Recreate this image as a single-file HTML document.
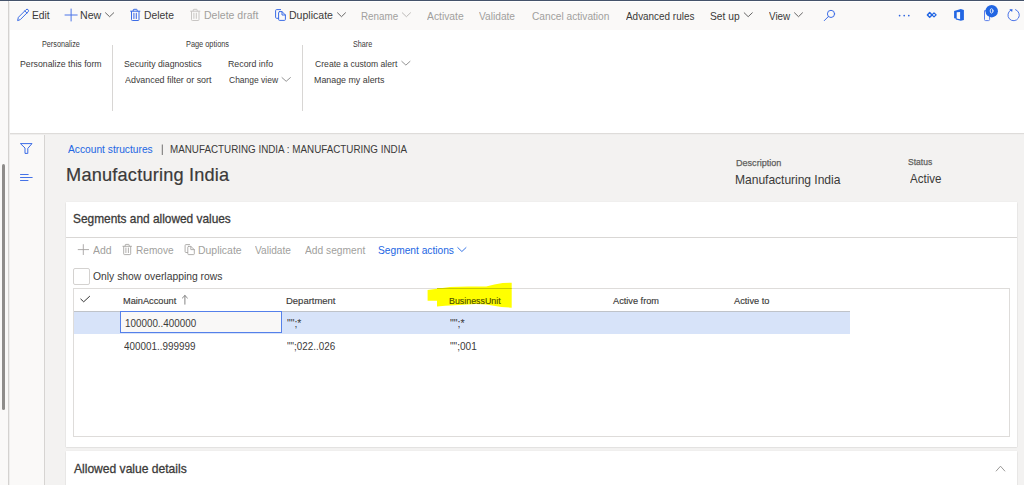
<!DOCTYPE html>
<html><head><meta charset="utf-8">
<style>
*{box-sizing:border-box;margin:0;padding:0}
html,body{width:1024px;height:485px;overflow:hidden;background:#faf9f8;font-family:"Liberation Sans",sans-serif;position:relative}
.a{position:absolute}
.t{position:absolute;white-space:pre;font-family:"Liberation Sans",sans-serif}
svg{position:absolute;overflow:visible}
</style></head><body>
<!-- top dark line -->
<div class="a" style="left:0;top:0;width:1024px;height:1px;background:#45536b"></div>
<div class="a" style="left:9px;top:1px;width:1015px;height:1px;background:#ffffff"></div>
<!-- toolbar -->
<div class="a" style="left:9px;top:2px;width:1015px;height:28px;background:#faf9f8"></div>
<!-- action pane -->
<div class="a" style="left:9px;top:30px;width:1015px;height:103px;background:#ffffff"></div>
<div class="a" style="left:112px;top:45px;width:1px;height:66px;background:#d8d6d4"></div>
<div class="a" style="left:302px;top:45px;width:1px;height:66px;background:#d8d6d4"></div>
<!-- separator -->
<div class="a" style="left:9px;top:133px;width:1015px;height:1px;background:#dedcda"></div>
<div class="a" style="left:9px;top:134px;width:1015px;height:1px;background:#efeeed"></div>
<!-- left border -->
<div class="a" style="left:8px;top:1px;width:1px;height:484px;background:#d4d2d0"></div>
<div class="a" style="left:9px;top:2px;width:1px;height:483px;background:#eeedec"></div>
<!-- scrollbar -->
<div class="a" style="left:2px;top:164px;width:3px;height:246px;background:#8f8d8b;border-radius:1.5px"></div>
<!-- nav pane -->
<div class="a" style="left:10px;top:135px;width:34px;height:350px;background:#faf9f8"></div>
<div class="a" style="left:44px;top:135px;width:1px;height:350px;background:#d6d4d2"></div>
<!-- content bg -->
<div class="a" style="left:45px;top:135px;width:979px;height:350px;background:#f3f2f1"></div>
<!-- panel 1 -->
<div class="a" style="left:66px;top:202px;width:951px;height:245px;background:#fff;box-shadow:0 0.5px 1.5px rgba(0,0,0,0.14),0 0 1px rgba(0,0,0,0.08)"></div>
<div class="a" style="left:66px;top:237px;width:951px;height:1px;background:#d9d7d5"></div>
<!-- checkbox -->
<div class="a" style="left:73px;top:268px;width:17px;height:17px;border:1px solid #d4d2d0;border-radius:2px;background:#fff"></div>
<!-- grid -->
<div class="a" style="left:73px;top:288px;width:937px;height:149px;border:1px solid #dedcda;background:#fff"></div>
<div class="a" style="left:74px;top:311px;width:776px;height:23px;background:#d7e3f9"></div>
<div class="a" style="left:74px;top:311px;width:776px;height:1px;background:#bfc3c9"></div>
<div class="a" style="left:120px;top:311px;width:162px;height:22px;border:1px solid #5580ea;background:#f9f8f7"></div>
<!-- panel 2 -->
<div class="a" style="left:66px;top:451px;width:951px;height:40px;background:#fff;box-shadow:0 0.5px 1.5px rgba(0,0,0,0.14),0 0 1px rgba(0,0,0,0.08)"></div>
<!-- yellow highlight -->
<svg style="left:0;top:0" width="1024" height="485"><path d="M427.6,289.9 L437,288.75 L449.8,287 L468.6,286.4 L486.2,286.6 L494.4,284.6 L502.6,282.9 L511.7,282.7 L511.7,307.7 L501.4,306.9 L486.2,304.6 L475.6,304 L459.2,304.9 L445.2,305.7 L437,306.6 L437,300.7 L427.6,300.7 Z" fill="#ffff00"/>
<rect x="437" y="288" width="74.7" height="1" fill="#c9c900"/></svg>

<!-- ICONS -->
<svg style="left:0;top:0" width="1024" height="485" fill="none" stroke-linecap="round" stroke-linejoin="round">
 <!-- pencil -->
 <path d="M17.7,20.2 L18.4,17.3 L26,9.7 A1.45,1.45 0 0 1 28.1,11.8 L20.5,19.4 Z M24.8,10.9 L26.9,13" stroke="#3b6ce6" stroke-width="1"/>
 <!-- plus New -->
 <path d="M71.1,9 V21 M65,15 H77.2" stroke="#4b74e8" stroke-width="1"/>
 <path d="M105.5,12.8 L109.6,16.7 L113.7,12.8" stroke="#555" stroke-width="0.9"/>
 <!-- trash -->
 <path d="M130.6,11.2 H139.9 M133.2,11 V10 Q133.2,9.3 134,9.3 H136.4 Q137.2,9.3 137.2,10 V11 M131.5,11.5 V19.7 Q131.5,20.5 132.3,20.5 H138.2 Q139,20.5 139,19.7 V11.5" stroke="#3b6ce6" stroke-width="1"/>
 <path d="M133.9,13.2 V18.4 M136.3,13.2 V18.4" stroke="#4b74e8" stroke-width="1.1"/>
 <path d="M190.6,11.2 H199.9 M193.2,11 V10 Q193.2,9.3 194,9.3 H196.4 Q197.2,9.3 197.2,10 V11 M191.5,11.5 V19.7 Q191.5,20.5 192.3,20.5 H198.2 Q199,20.5 199,19.7 V11.5 M193.9,13.2 V18.4 M196.3,13.2 V18.4" stroke="#c8c6c4" stroke-width="1"/>
 <!-- duplicate -->
 <path d="M280.6,9.6 H276.6 Q275.6,9.6 275.6,10.6 V17.3 Q275.6,18.3 276.6,18.3 H278.4" stroke="#3b6ce6" stroke-width="1"/>
 <path d="M279.5,11.6 H282 L285.4,15 V19.4 Q285.4,20.4 284.4,20.4 H279.5 Q278.6,20.4 278.6,19.4 V12.6 Q278.6,11.6 279.5,11.6 Z M282,11.6 V15 H285.4" stroke="#3b6ce6" stroke-width="1"/>
 <path d="M337.5,12.8 L341.5,16.7 L345.5,12.8" stroke="#555" stroke-width="0.9"/>
 <path d="M402.3,12.8 L406.4,16.7 L410.5,12.8" stroke="#b5b3b1" stroke-width="0.9"/>
 <path d="M744.2,12.8 L748.2,16.7 L752.3,12.8" stroke="#555" stroke-width="0.9"/>
 <path d="M794.5,12.8 L798.5,16.7 L802.5,12.8" stroke="#555" stroke-width="0.9"/>
 <!-- search -->
 <circle cx="831" cy="13.9" r="3.6" stroke="#3b6ce6" stroke-width="1"/>
 <path d="M828.4,16.5 L824.3,20.6" stroke="#3b6ce6" stroke-width="1"/>
 <!-- dots -->
 <circle cx="899.6" cy="15.6" r="0.85" fill="#2b63e0"/>
 <circle cx="904.2" cy="15.6" r="0.85" fill="#2b63e0"/>
 <circle cx="908.8" cy="15.6" r="0.85" fill="#2b63e0"/>
 <!-- power icon -->
 <path d="M929.7,12.5 L932,14.9 L929.7,17.3 L927.4,14.9 Z" stroke="#2266e3" stroke-width="1.5"/>
 <path d="M934,12.9 L936.1,14.9 L934,16.9 L932,14.9 Z" stroke="#2266e3" stroke-width="1.3"/>
 <!-- office -->
 <path fill-rule="evenodd" d="M954.1,11 L960.8,9.1 L963.9,9.9 V20 L960.8,20.8 L955.8,19.5 V18.4 L954.1,18.3 Z M956.7,12.3 L960.1,11.9 V19.3 L956.7,18.6 Z" fill="#2266e3"/>
 <!-- notification -->
 <path d="M984.5,11 V19.5 Q984.5,20.6 985.6,20.6 H988.5 Q989.6,20.6 989.6,19.5 V11 Z" stroke="#5b7fea" stroke-width="1"/>
 <circle cx="991.7" cy="11.2" r="6.2" fill="#2266e3"/>
 <ellipse cx="991.6" cy="10.9" rx="1.4" ry="2.2" stroke="#fff" stroke-width="0.85"/>
 <!-- refresh -->
 <path d="M1010.75,10.06 A5.7,5.7 0 1 0 1015.55,9.64" stroke="#4b74e8" stroke-width="1"/>
 <path d="M1009.3,9.2 L1012.6,9.2 L1012.1,12.1 Z" fill="#2f66e4"/>
 <!-- action chevrons -->
 <path d="M282,77.6 L286.2,81.3 L290.4,77.6" stroke="#777" stroke-width="0.8"/>
 <path d="M401.8,61.4 L405.9,65.1 L410,61.4" stroke="#777" stroke-width="0.8"/>
 <!-- breadcrumb sep -->
 <path d="M162.3,144.9 V154.6" stroke="#6b6a69" stroke-width="0.95"/>
 <!-- funnel -->
 <path d="M20.8,143.6 H32 L27.8,148.4 V153.4 H25 V148.4 Z" stroke="#3b6ce6" stroke-width="1"/>
 <!-- lines -->
 <path d="M20.5,174.5 H28.2 M20.5,177.5 H32.2 M20.5,180.5 H28" stroke="#3b6ce6" stroke-width="0.95"/>
 <!-- panel plus -->
 <path d="M83.3,244.6 V254.6 M78.2,249.6 H88.6" stroke="#a5a3a1" stroke-width="0.9"/>
 <!-- panel trash -->
 <path d="M122.9,246.3 H131.5 M125.2,246 V245 Q125.2,244.4 125.9,244.4 H128.5 Q129.2,244.4 129.2,245 V246 M123.7,246.5 V253.8 Q123.7,254.6 124.5,254.6 H129.9 Q130.7,254.6 130.7,253.8 V246.5 M125.9,248 V252.6 M128.4,248 V252.6" stroke="#a8a6a4" stroke-width="0.9"/>
 <!-- panel dup -->
 <path d="M189.6,244.6 H186 Q185.1,244.6 185.1,245.5 V251.6 Q185.1,252.5 186,252.5 H187.6" stroke="#a8a6a4" stroke-width="0.9"/>
 <path d="M188.6,246.4 H190.8 L194.3,249.6 V253.8 Q194.3,254.6 193.5,254.6 H188.6 Q187.8,254.6 187.8,253.8 V247.2 Q187.8,246.4 188.6,246.4 Z M190.8,246.4 V249.6 H194.3" stroke="#a8a6a4" stroke-width="0.9"/>
 <path d="M457.8,247.6 L461.9,251.5 L466,247.6" stroke="#2266e3" stroke-width="0.9"/>
 <!-- grid check -->
 <path d="M80.8,299.1 L83.7,301.8 L89.6,296.3" stroke="#333" stroke-width="1"/>
 <!-- up arrow -->
 <path d="M184.9,295.6 V304.2 M182.4,298 L184.9,295.5 L187.4,298" stroke="#777" stroke-width="0.9"/>
 <!-- collapse chevron -->
 <path d="M996.2,471 L1000.5,466.2 L1004.8,471" stroke="#8f8d8b" stroke-width="0.9"/>
</svg>
<div class="t" style="left:31.88px;top:10.0px;font-size:11.17px;line-height:11.17px;letter-spacing:0.003px;color:#3b3a39;transform:scaleX(0.922);transform-origin:0 0">Edit</div>
<div class="t" style="left:80.05px;top:10.0px;font-size:11.17px;line-height:11.17px;letter-spacing:0.012px;color:#3b3a39;transform:scaleX(0.952);transform-origin:0 0">New</div>
<div class="t" style="left:144.07px;top:10.0px;font-size:11.17px;line-height:11.17px;letter-spacing:0.009px;color:#3b3a39;transform:scaleX(0.927);transform-origin:0 0">Delete</div>
<div class="t" style="left:204.06px;top:10.0px;font-size:11.17px;line-height:11.17px;letter-spacing:-0.0px;color:#a19f9d;transform:scaleX(0.943);transform-origin:0 0">Delete draft</div>
<div class="t" style="left:289.06px;top:10.0px;font-size:11.17px;line-height:11.17px;letter-spacing:0.009px;color:#3b3a39;transform:scaleX(0.944);transform-origin:0 0">Duplicate</div>
<div class="t" style="left:361.02px;top:11.0px;font-size:11.17px;line-height:11.17px;letter-spacing:0.015px;color:#a19f9d;transform:scaleX(0.88);transform-origin:0 0">Rename</div>
<div class="t" style="left:426.9px;top:11.0px;font-size:11.17px;line-height:11.17px;letter-spacing:-0.006px;color:#a19f9d;transform:scaleX(0.926);transform-origin:0 0">Activate</div>
<div class="t" style="left:479.4px;top:11.0px;font-size:11.17px;line-height:11.17px;letter-spacing:-0.003px;color:#a19f9d;transform:scaleX(0.913);transform-origin:0 0">Validate</div>
<div class="t" style="left:531.9px;top:11.0px;font-size:11.17px;line-height:11.17px;letter-spacing:-0.003px;color:#a19f9d;transform:scaleX(0.912);transform-origin:0 0">Cancel activation</div>
<div class="t" style="left:625.6px;top:11.0px;font-size:11.17px;line-height:11.17px;letter-spacing:0.006px;color:#3b3a39;transform:scaleX(0.888);transform-origin:0 0">Advanced rules</div>
<div class="t" style="left:709.98px;top:11.0px;font-size:11.17px;line-height:11.17px;letter-spacing:0.006px;color:#3b3a39;transform:scaleX(0.919);transform-origin:0 0">Set up</div>
<div class="t" style="left:768.75px;top:11.0px;font-size:11.17px;line-height:11.17px;letter-spacing:0.012px;color:#3b3a39;transform:scaleX(0.885);transform-origin:0 0">View</div>
<div class="t" style="left:42.04px;top:40.0px;font-size:8.38px;line-height:8.38px;letter-spacing:0.003px;color:#3b3a39;transform:scaleX(0.864);transform-origin:0 0">Personalize</div>
<div class="t" style="left:186.02px;top:40.0px;font-size:8.38px;line-height:8.38px;letter-spacing:0.003px;color:#3b3a39;transform:scaleX(0.879);transform-origin:0 0">Page options</div>
<div class="t" style="left:352.54px;top:40.0px;font-size:8.38px;line-height:8.38px;letter-spacing:0.022px;color:#3b3a39;transform:scaleX(0.86);transform-origin:0 0">Share</div>
<div class="t" style="left:19.91px;top:59.0px;font-size:9.78px;line-height:9.78px;letter-spacing:0.006px;color:#3b3a39;transform:scaleX(0.894);transform-origin:0 0">Personalize this form</div>
<div class="t" style="left:124.41px;top:59.0px;font-size:9.78px;line-height:9.78px;letter-spacing:0.003px;color:#3b3a39;transform:scaleX(0.894);transform-origin:0 0">Security diagnostics</div>
<div class="t" style="left:227.9px;top:59.0px;font-size:9.78px;line-height:9.78px;letter-spacing:0.0px;color:#3b3a39;transform:scaleX(0.902);transform-origin:0 0">Record info</div>
<div class="t" style="left:314.7px;top:59.0px;font-size:9.78px;line-height:9.78px;letter-spacing:-0.0px;color:#3b3a39;transform:scaleX(0.882);transform-origin:0 0">Create a custom alert</div>
<div class="t" style="left:125.3px;top:75.0px;font-size:9.78px;line-height:9.78px;letter-spacing:-0.006px;color:#3b3a39;transform:scaleX(0.912);transform-origin:0 0">Advanced filter or sort</div>
<div class="t" style="left:228.8px;top:75.0px;font-size:9.78px;line-height:9.78px;letter-spacing:0.009px;color:#3b3a39;transform:scaleX(0.868);transform-origin:0 0">Change view</div>
<div class="t" style="left:313.79px;top:75.0px;font-size:9.78px;line-height:9.78px;letter-spacing:-0.003px;color:#3b3a39;transform:scaleX(0.908);transform-origin:0 0">Manage my alerts</div>
<div class="t" style="left:67.9px;top:144.0px;font-size:11.17px;line-height:11.17px;letter-spacing:0.006px;color:#2266e3;transform:scaleX(0.916);transform-origin:0 0">Account structures</div>
<div class="t" style="left:169.72px;top:144.0px;font-size:11.17px;line-height:11.17px;letter-spacing:0.006px;color:#3b3a39;transform:scaleX(0.88);transform-origin:0 0">MANUFACTURING INDIA : MANUFACTURING INDIA</div>
<div class="t" style="left:66.1px;top:166.0px;font-size:18.16px;line-height:18.16px;letter-spacing:0.2px;color:#3b3a39;-webkit-text-stroke:0.2px #3b3a39">Manufacturing India</div>
<div class="t" style="left:735.75px;top:158.0px;font-size:9.78px;line-height:9.78px;letter-spacing:-0.006px;color:#605e5c;transform:scaleX(0.929);transform-origin:0 0;-webkit-text-stroke:0.25px #605e5c">Description</div>
<div class="t" style="left:735.29px;top:174.0px;font-size:12.57px;line-height:12.57px;letter-spacing:-0.05px;color:#3b3a39;transform:scaleX(0.963);transform-origin:0 0">Manufacturing India</div>
<div class="t" style="left:908.0px;top:157.0px;font-size:9.78px;line-height:9.78px;letter-spacing:0.0px;color:#605e5c;transform:scaleX(0.875);transform-origin:0 0;-webkit-text-stroke:0.25px #605e5c">Status</div>
<div class="t" style="left:909.5px;top:173.0px;font-size:12.57px;line-height:12.57px;letter-spacing:0.003px;color:#3b3a39;transform:scaleX(0.919);transform-origin:0 0">Active</div>
<div class="t" style="left:72.76px;top:213.0px;font-size:12.57px;line-height:12.57px;letter-spacing:0.003px;color:#3b3a39;transform:scaleX(0.945);transform-origin:0 0;-webkit-text-stroke:0.3px #3b3a39">Segments and allowed values</div>
<div class="t" style="left:92.5px;top:245.0px;font-size:11.17px;line-height:11.17px;letter-spacing:-0.006px;color:#a19f9d;transform:scaleX(0.937);transform-origin:0 0">Add</div>
<div class="t" style="left:135.69px;top:245.0px;font-size:11.17px;line-height:11.17px;letter-spacing:0.0px;color:#a19f9d;transform:scaleX(0.905);transform-origin:0 0">Remove</div>
<div class="t" style="left:198.46px;top:245.0px;font-size:11.17px;line-height:11.17px;letter-spacing:-0.003px;color:#a19f9d;transform:scaleX(0.938);transform-origin:0 0">Duplicate</div>
<div class="t" style="left:254.5px;top:245.0px;font-size:11.17px;line-height:11.17px;letter-spacing:0.006px;color:#a19f9d;transform:scaleX(0.91);transform-origin:0 0">Validate</div>
<div class="t" style="left:304.5px;top:245.0px;font-size:11.17px;line-height:11.17px;letter-spacing:-0.006px;color:#a19f9d;transform:scaleX(0.917);transform-origin:0 0">Add segment</div>
<div class="t" style="left:377.83px;top:245.0px;font-size:11.17px;line-height:11.17px;letter-spacing:-0.006px;color:#2266e3;transform:scaleX(0.915);transform-origin:0 0">Segment actions</div>
<div class="t" style="left:93.4px;top:271.0px;font-size:11.17px;line-height:11.17px;letter-spacing:0.006px;color:#3b3a39;transform:scaleX(0.927);transform-origin:0 0">Only show overlapping rows</div>
<div class="t" style="left:123.06px;top:296.0px;font-size:9.78px;line-height:9.78px;letter-spacing:-0.003px;color:#3b3a39;transform:scaleX(0.943);transform-origin:0 0;-webkit-text-stroke:0.15px #3b3a39">MainAccount</div>
<div class="t" style="left:285.93px;top:296.0px;font-size:9.78px;line-height:9.78px;letter-spacing:0.0px;color:#3b3a39;transform:scaleX(0.97);transform-origin:0 0;-webkit-text-stroke:0.15px #3b3a39">Department</div>
<div class="t" style="left:449.29px;top:296.0px;font-size:9.78px;line-height:9.78px;letter-spacing:0.003px;color:#4d4d00;transform:scaleX(0.907);transform-origin:0 0;-webkit-text-stroke:0.15px #4d4d00">BusinessUnit</div>
<div class="t" style="left:613.25px;top:296.0px;font-size:9.78px;line-height:9.78px;letter-spacing:-0.003px;color:#3b3a39;transform:scaleX(0.942);transform-origin:0 0;-webkit-text-stroke:0.15px #3b3a39">Active from</div>
<div class="t" style="left:734.4px;top:296.0px;font-size:9.78px;line-height:9.78px;letter-spacing:-0.0px;color:#3b3a39;transform:scaleX(0.946);transform-origin:0 0;-webkit-text-stroke:0.15px #3b3a39">Active to</div>
<div class="t" style="left:124.52px;top:318.0px;font-size:11.17px;line-height:11.17px;letter-spacing:0.006px;color:#3b3a39;transform:scaleX(0.882);transform-origin:0 0">100000..400000</div>
<div class="t" style="left:123.7px;top:341.0px;font-size:11.17px;line-height:11.17px;letter-spacing:0.006px;color:#3b3a39;transform:scaleX(0.886);transform-origin:0 0">400001..999999</div>
<div class="t" style="left:287.0px;top:341.0px;font-size:11.17px;line-height:11.17px;letter-spacing:0.006px;color:#3b3a39;transform:scaleX(0.883);transform-origin:0 0">&quot;&quot;;022..026</div>
<div class="t" style="left:449.9px;top:341.0px;font-size:11.17px;line-height:11.17px;letter-spacing:0.009px;color:#3b3a39;transform:scaleX(0.903);transform-origin:0 0">&quot;&quot;;001</div>
<div class="t" style="left:287.0px;top:318.0px;font-size:11.17px;line-height:11.17px;letter-spacing:0.0px;color:#3b3a39;transform:scaleX(0.94);transform-origin:0 0">&quot;&quot;;*</div>
<div class="t" style="left:449.9px;top:318.0px;font-size:11.17px;line-height:11.17px;letter-spacing:0.0px;color:#3b3a39;transform:scaleX(0.96);transform-origin:0 0">&quot;&quot;;*</div>
<div class="t" style="left:73.75px;top:463.0px;font-size:12.57px;line-height:12.57px;letter-spacing:-0.009px;color:#3b3a39;transform:scaleX(0.962);transform-origin:0 0;-webkit-text-stroke:0.3px #3b3a39">Allowed value details</div>
</body></html>
